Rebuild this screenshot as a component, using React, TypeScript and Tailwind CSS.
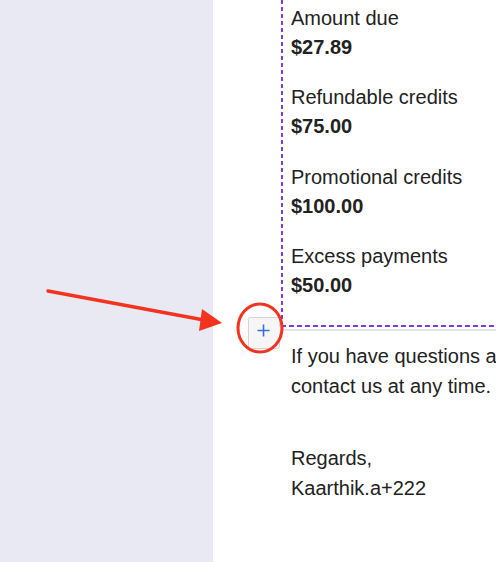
export default function App() {
  const groups = [
    ["Amount due", "$27.89"],
    ["Refundable credits", "$75.00"],
    ["Promotional credits", "$100.00"],
    ["Excess payments", "$50.00"],
  ];
  return (
    <div
      className="relative flex w-[496px] h-[562px] overflow-hidden bg-white text-[#222] text-[20px]"
      style={{ fontFamily: '"Liberation Sans", Arial, sans-serif' }}
    >
      <div className="w-[213px] shrink-0 h-full bg-[#e9e9f4]" />
      <div className="pl-[68px] w-[620px] shrink-0 flex flex-col">
        <div className="flex">
          <div className="w-[2px] shrink-0 bg-[repeating-linear-gradient(to_bottom,#7c3aed_0px,#7c3aed_4px,transparent_4px,transparent_7px)]" />
          <div className="pl-[8px] pt-[4px] pb-[25px] flex flex-col gap-[21.3px]">
            {groups.map(([l, v]) => (
              <div key={l} className="leading-[29px]">
                <div>{l}</div>
                <div className="font-bold">{v}</div>
              </div>
            ))}
          </div>
        </div>
        <div className="h-[2px] bg-[repeating-linear-gradient(to_right,#7c3aed_0px,#7c3aed_5px,transparent_5px,transparent_8px)]" />
        <div className="h-[2px] mt-[2px] bg-[#e4e4e4]" />
        <div className="pl-[10px] mt-[10px] leading-[30px]">
          <div>If you have questions about this invoice, please</div>
          <div>contact us at any time.</div>
          <div className="mt-[42px]">Regards,</div>
          <div className="leading-[31px]">Kaarthik.a+222</div>
        </div>
      </div>

      {/* plus button */}
      <svg className="absolute left-[246px] top-[315px]" width="40" height="36" viewBox="0 0 40 36">
        <path
          d="M4.5 2.5 H31.5 Q33.5 2.5 33.5 4.5 V11 L36 15 L33.5 19 V31.5 Q33.5 33.5 31.5 33.5 H4.5 Q2.5 33.5 2.5 31.5 V4.5 Q2.5 2.5 4.5 2.5 Z"
          fill="#f6f6f6"
          stroke="#d4d4d4"
          strokeWidth="1"
        />
        <path d="M17.5 9.5 V21.5 M11.5 15.5 H23.5" stroke="#3b6fd8" strokeWidth="1.6" />
      </svg>

      {/* annotation */}
      <svg className="absolute left-0 top-0 pointer-events-none" width="496" height="562" viewBox="0 0 496 562">
        <line x1="48" y1="291" x2="204" y2="320" stroke="#f4331f" strokeWidth="3.5" strokeLinecap="round" />
        <polygon points="222,323 202,309 199,331" fill="#f4331f" />
        <ellipse cx="260" cy="328" rx="22" ry="24" fill="none" stroke="#f4331f" strokeWidth="3" />
      </svg>
    </div>
  );
}
